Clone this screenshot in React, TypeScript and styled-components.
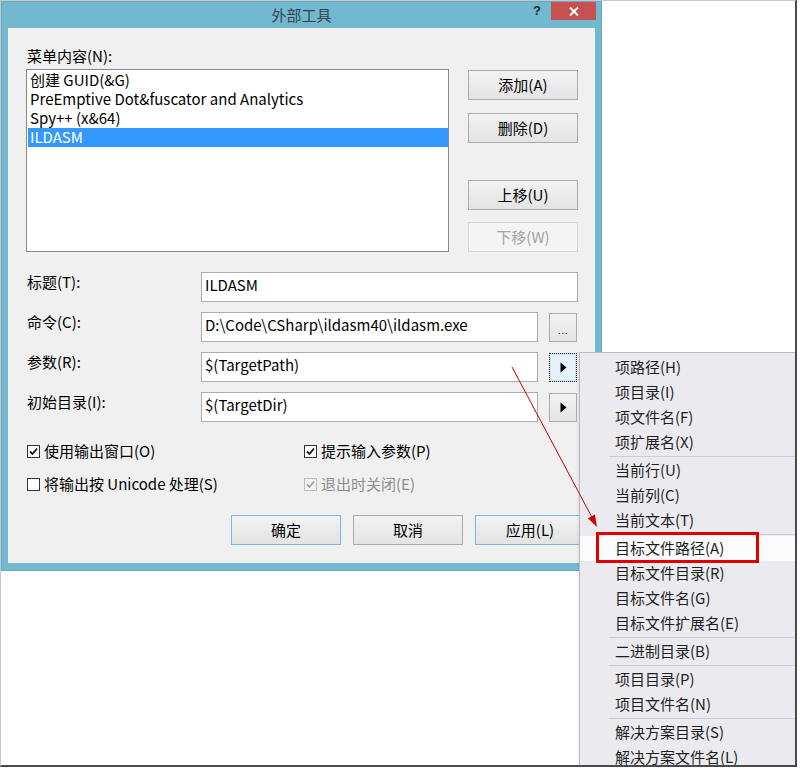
import React from "react";
import styled, { createGlobalStyle, css } from "styled-components";

const Global = createGlobalStyle`
  html, body { margin: 0; padding: 0; background: #fff; }
  body {
    font-family: "Noto Sans CJK SC", "Noto Sans", sans-serif;
    font-size: 15px;
    color: #000;
  }
  * { box-sizing: border-box; }
`;

const Frame = styled.div`
  position: relative;
  width: 797px;
  height: 767px;
  background: #fff;
  border: 1px solid #c6c6d2;
  border-right: 2px solid #4a4a4a;
  border-bottom: 2px solid #4a4a4a;
  overflow: hidden;
`;

const Dialog = styled.div`
  width: 601px;
  height: 570px;
  background: #72b8cf;
  border: 1px solid #67abc1;
  display: flex;
  flex-direction: column;
  padding: 0 6px 7px 6px;
`;

const TitleBar = styled.div`
  height: 26px;
  margin: 0 -6px;
  display: grid;
  grid-template-columns: 1fr auto 1fr;
  align-items: start;
`;

const TitleText = styled.div`
  grid-column: 2;
  line-height: 25px;
  font-size: 15px;
  color: #34444b;
`;

const TitleControls = styled.div`
  grid-column: 3;
  display: flex;
  justify-content: flex-end;
  align-items: flex-start;
  padding-right: 5px;
`;

const HelpGlyph = styled.span`
  font-family: "Liberation Sans", sans-serif;
  font-weight: bold;
  font-size: 13px;
  line-height: 18px;
  color: #1d2b36;
  margin-right: 10px;
`;

const CloseButton = styled.div`
  width: 45px;
  height: 18px;
  background: #c75050;
  display: flex;
  align-items: center;
  justify-content: center;
`;

const Content = styled.div`
  flex: 1;
  background: #f0f0f0;
  padding: 18px 0 0 18px;
  display: flex;
  flex-direction: column;
`;

const SectionLabel = styled.div`
  height: 20px;
  line-height: 19px;
  padding-left: 1px;
  margin-bottom: 3px;
`;

const TopRow = styled.div`
  display: flex;
  height: 183px;
`;

const ListBox = styled.div`
  width: 423px;
  height: 183px;
  border: 1px solid #828790;
  background: #fff;
  padding: 1px 0 0 1px;
`;

const ListItem = styled.div<{ $selected?: boolean }>`
  height: 19px;
  line-height: 18px;
  padding-left: 2px;
  white-space: nowrap;
  ${(p) =>
    p.$selected &&
    css`
      background: #3399ff;
      color: #fff;
    `}
`;

const SideButtons = styled.div`
  margin-left: 19px;
  padding-top: 1px;
  display: flex;
  flex-direction: column;
`;

const Btn = styled.button<{ $w?: number; $h?: number; $mt?: number; $accent?: boolean }>`
  width: ${(p) => p.$w ?? 110}px;
  height: ${(p) => p.$h ?? 30}px;
  margin-top: ${(p) => p.$mt ?? 0}px;
  padding: 0 0 1px 0;
  font-family: inherit;
  font-size: 15px;
  color: #000;
  border: 1px solid ${(p) => (p.$accent ? "#7eb4ea" : "#acacac")};
  background: linear-gradient(#f2f2f2, #e4e4e4);
  display: flex;
  align-items: center;
  justify-content: center;
  flex-shrink: 0;
  &:disabled {
    color: #a3a3a3;
    border-color: #d6d6d6;
    background: #f4f4f4;
  }
`;

const Fields = styled.div`
  margin-top: 20px;
  display: flex;
  flex-direction: column;
  gap: 10px;
`;

const FieldRow = styled.div`
  display: grid;
  grid-template-columns: 175px auto;
  height: 30px;
`;

const FieldLabel = styled.div`
  line-height: 19px;
  padding-left: 1px;
`;

const InputGroup = styled.div`
  display: flex;
  gap: 11px;
`;

const TextInput = styled.div<{ $w: number }>`
  width: ${(p) => p.$w}px;
  height: 30px;
  border: 1px solid #abadb3;
  background: #fff;
  padding-left: 3px;
  line-height: 23px;
  white-space: nowrap;
  overflow: hidden;
`;

const SmallBtn = styled.div<{ $focus?: boolean }>`
  width: 28px;
  height: 29px;
  margin-top: 1px;
  border: 1px solid #acacac;
  background: linear-gradient(#f2f2f2, #e4e4e4);
  display: flex;
  align-items: center;
  justify-content: center;
  ${(p) =>
    p.$focus &&
    css`
      border: 1px dotted #111;
      background: #e6f2fb;
      box-shadow: inset 0 0 0 1px #c9e2f6;
    `}
`;

const Dots = styled.span`
  font-family: "Liberation Sans", sans-serif;
  font-size: 11px;
  letter-spacing: 0.5px;
  margin-top: 5px;
  color: #222;
`;

const Options = styled.div`
  margin-top: 19px;
  display: grid;
  grid-template-columns: 277px auto;
  row-gap: 13px;
  padding-left: 1px;
`;

const CheckRow = styled.div<{ $disabled?: boolean }>`
  display: flex;
  align-items: center;
  gap: 4px;
  height: 20px;
  line-height: 20px;
  color: ${(p) => (p.$disabled ? "#8d8d8d" : "#000")};
  white-space: nowrap;
`;

const Box = styled.span<{ $disabled?: boolean }>`
  width: 13px;
  height: 13px;
  border: 1px solid ${(p) => (p.$disabled ? "#bcbcbc" : "#333")};
  background: ${(p) => (p.$disabled ? "#f4f4f4" : "#fff")};
  display: inline-flex;
  align-items: center;
  justify-content: center;
  flex-shrink: 0;
`;

const Actions = styled.div`
  margin-top: 21px;
  display: flex;
  justify-content: flex-end;
  gap: 12px;
  padding-right: 10px;
`;

const Menu = styled.div`
  position: absolute;
  left: 578px;
  top: 351px;
  width: 230px;
  height: 430px;
  background: #ebebef;
  border: 1px solid #b9bac4;
  padding-top: 2px;
  box-shadow: -1px 1px 2px rgba(0, 0, 0, 0.08);
`;

const MenuItem = styled.div<{ $hl?: boolean }>`
  height: 25px;
  line-height: 24px;
  padding-left: 35px;
  color: #1e1e1e;
  white-space: nowrap;
  background: ${(p) => (p.$hl ? "#fbfbfb" : "transparent")};
`;

const MenuSep = styled.div`
  height: 3px;
  display: flex;
  align-items: center;
  padding-left: 29px;
  &::after {
    content: "";
    flex: 1;
    height: 1px;
    background: #cccedb;
  }
`;

const RedBox = styled.div`
  position: absolute;
  left: 595px;
  top: 531px;
  width: 163px;
  height: 31px;
  border: 3px solid #e00000;
`;

const Overlay = styled.svg`
  position: absolute;
  left: 0;
  top: 0;
  pointer-events: none;
`;

const Check = ({ disabled }: { disabled?: boolean }) => (
  <svg width="9" height="9" viewBox="0 0 9 9">
    <path
      d="M1 4.5 L3.5 7 L8 1.5"
      fill="none"
      stroke={disabled ? "#a0a0a0" : "#111"}
      strokeWidth="1.8"
    />
  </svg>
);

const Tri = () => (
  <svg width="7" height="11" viewBox="0 0 7 11">
    <path d="M0.5 0.5 L6.5 5.5 L0.5 10.5 Z" fill="#000" />
  </svg>
);

type MenuEntry = { t: string; hl?: boolean } | "sep";

const menuEntries: MenuEntry[] = [
  { t: "项路径(H)" },
  { t: "项目录(I)" },
  { t: "项文件名(F)" },
  { t: "项扩展名(X)" },
  "sep",
  { t: "当前行(U)" },
  { t: "当前列(C)" },
  { t: "当前文本(T)" },
  "sep",
  { t: "目标文件路径(A)", hl: true },
  { t: "目标文件目录(R)" },
  { t: "目标文件名(G)" },
  { t: "目标文件扩展名(E)" },
  "sep",
  { t: "二进制目录(B)" },
  "sep",
  { t: "项目目录(P)" },
  { t: "项目文件名(N)" },
  "sep",
  { t: "解决方案目录(S)" },
  { t: "解决方案文件名(L)" },
];

const listItems = [
  "创建 GUID(&G)",
  "PreEmptive Dot&fuscator and Analytics",
  "Spy++ (x&64)",
  "ILDASM",
];

export default function App() {
  return (
    <>
      <Global />
      <Frame>
        <Dialog>
          <TitleBar>
            <TitleText>外部工具</TitleText>
            <TitleControls>
              <HelpGlyph>?</HelpGlyph>
              <CloseButton>
                <svg width="10" height="9" viewBox="0 0 10 9">
                  <path d="M1 0.5 L9 8.5 M9 0.5 L1 8.5" stroke="#fff" strokeWidth="2" />
                </svg>
              </CloseButton>
            </TitleControls>
          </TitleBar>
          <Content>
            <SectionLabel>菜单内容(N):</SectionLabel>
            <TopRow>
              <ListBox>
                {listItems.map((t, i) => (
                  <ListItem key={t} $selected={i === 3}>
                    {t}
                  </ListItem>
                ))}
              </ListBox>
              <SideButtons>
                <Btn>添加(A)</Btn>
                <Btn $mt={13}>删除(D)</Btn>
                <Btn $mt={37}>上移(U)</Btn>
                <Btn $mt={12} disabled>
                  下移(W)
                </Btn>
              </SideButtons>
            </TopRow>
            <Fields>
              <FieldRow>
                <FieldLabel>标题(T):</FieldLabel>
                <TextInput $w={377}>ILDASM</TextInput>
              </FieldRow>
              <FieldRow>
                <FieldLabel>命令(C):</FieldLabel>
                <InputGroup>
                  <TextInput $w={337}>D:\Code\CSharp\ildasm40\ildasm.exe</TextInput>
                  <SmallBtn>
                    <Dots>...</Dots>
                  </SmallBtn>
                </InputGroup>
              </FieldRow>
              <FieldRow>
                <FieldLabel>参数(R):</FieldLabel>
                <InputGroup>
                  <TextInput $w={337}>$(TargetPath)</TextInput>
                  <SmallBtn $focus>
                    <Tri />
                  </SmallBtn>
                </InputGroup>
              </FieldRow>
              <FieldRow>
                <FieldLabel>初始目录(I):</FieldLabel>
                <InputGroup>
                  <TextInput $w={337}>$(TargetDir)</TextInput>
                  <SmallBtn>
                    <Tri />
                  </SmallBtn>
                </InputGroup>
              </FieldRow>
            </Fields>
            <Options>
              <CheckRow>
                <Box>
                  <Check />
                </Box>
                使用输出窗口(O)
              </CheckRow>
              <CheckRow>
                <Box>
                  <Check />
                </Box>
                提示输入参数(P)
              </CheckRow>
              <CheckRow>
                <Box />
                将输出按 Unicode 处理(S)
              </CheckRow>
              <CheckRow $disabled>
                <Box $disabled>
                  <Check disabled />
                </Box>
                退出时关闭(E)
              </CheckRow>
            </Options>
            <Actions>
              <Btn $accent>确定</Btn>
              <Btn>取消</Btn>
              <Btn $accent>应用(L)</Btn>
            </Actions>
          </Content>
        </Dialog>

        <Menu>
          {menuEntries.map((e, i) =>
            e === "sep" ? (
              <MenuSep key={i} />
            ) : (
              <MenuItem key={i} $hl={e.hl}>
                {e.t}
              </MenuItem>
            )
          )}
        </Menu>

        <RedBox />

        <Overlay width="795" height="764" viewBox="0 0 795 764">
          <line x1="511" y1="366" x2="590.6" y2="515.6" stroke="#c40000" strokeWidth="1" />
          <polygon points="596,526 586.9,517.3 593.9,513.5" fill="#d00000" />
        </Overlay>
      </Frame>
    </>
  );
}
